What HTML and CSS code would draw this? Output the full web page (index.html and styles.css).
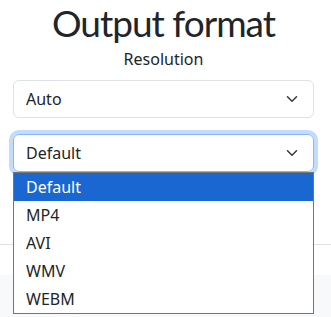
FILE: index.html
```html
<!DOCTYPE html>
<html lang="en">
<head>
    <meta charset="UTF-8">
    <title>Output format</title>
    <link rel="stylesheet" href="styles.css">
</head>
<body>
    <div class="modal">
        <div class="modal-body">
            <h1 class="title">Output format</h1>
            <div class="label">Resolution</div>
            <div class="select">
                <span>Auto</span>
                <svg class="chevron" viewBox="0 0 16 16"><path d="m2 5 6 6 6-6" fill="none" stroke="#343a40" stroke-width="2" stroke-linecap="round" stroke-linejoin="round"/></svg>
            </div>
            <div class="select-wrap">
                <div class="select focus">
                    <span>Default</span>
                    <svg class="chevron" viewBox="0 0 16 16"><path d="m2 5 6 6 6-6" fill="none" stroke="#343a40" stroke-width="2" stroke-linecap="round" stroke-linejoin="round"/></svg>
                </div>
                <ul class="options">
                    <li class="active">Default</li>
                    <li>MP4</li>
                    <li>AVI</li>
                    <li>WMV</li>
                    <li>WEBM</li>
                </ul>
            </div>
        </div>
        <div class="modal-footer"></div>
        <div class="page-bg"></div>
    </div>
</body>
</html>
```
FILE: styles.css
```css
html, body {
    margin: 0;
    padding: 0;
    height: 100%;
}
body {
    font-family: "Noto Sans", "Open Sans", sans-serif;
    color: #212529;
    background-color: #fff;
    overflow: hidden;
}
.modal {
    display: flex;
    flex-direction: column;
    height: 100%;
}
.modal-body {
    padding: 0 17px 0 13px;
    height: 244px;
    box-sizing: border-box;
}
.title {
    margin: 0;
    font-family: Lato, "Noto Sans", sans-serif;
    font-size: 37px;
    font-weight: 400;
    letter-spacing: -1px;
    line-height: 46px;
    text-align: center;
}
.label {
    margin-top: 1px;
    font-size: 16px;
    line-height: 24px;
    text-align: center;
}
.select {
    margin-top: 9px;
    display: flex;
    align-items: center;
    justify-content: space-between;
    height: 38px;
    box-sizing: border-box;
    padding: 0 15px 0 12px;
    border: 1px solid #dee2e6;
    border-radius: 6px;
    font-size: 16px;
}
.chevron {
    width: 12px;
    height: 12px;
}
.select-wrap {
    position: relative;
    margin-top: 16px;
}
.select-wrap .select {
    margin-top: 0;
}
.focus {
    border-color: #86b7fe;
    box-shadow: 0 0 0 4px rgba(13, 110, 253, 0.25);
}
.options {
    position: absolute;
    top: 38px;
    left: 0;
    right: 0;
    margin: 0;
    padding: 0;
    list-style: none;
    background: #fff;
    border: 1px solid #767676;
    font-size: 16px;
    z-index: 5;
}
.options li {
    height: 28px;
    line-height: 28px;
    padding-left: 12px;
}
.options .active {
    background-color: #1a67d1;
    color: #fff;
}
.modal-footer {
    height: 30px;
    border-top: 1px solid #dee2e6;
}
.page-bg {
    flex: 1;
    background-color: #f8f9fa;
}
```
